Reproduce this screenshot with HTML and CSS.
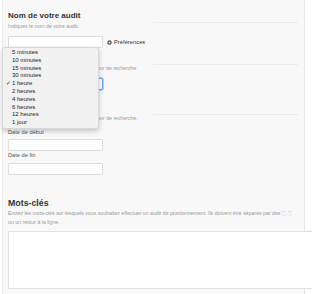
FILE: index.html
```html
<!DOCTYPE html>
<html lang="fr">
<head>
    <meta charset="UTF-8">
    <title>Nouvel audit</title>
    <link rel="stylesheet" href="styles.css">
</head>
<body>
    <div class="page">
        <div class="panel">
            <div class="field">
                <h3 class="field-title">Nom de votre audit</h3>
                <p class="help">Indiquez le nom de votre audit.</p>
                <div class="input-row">
                    <input class="text-input" type="text">
                    <span class="prefs">
                        <svg width="5" height="5" viewBox="0 0 10 10"><circle cx="5" cy="5" r="3.2" fill="none" stroke="#444" stroke-width="2.4"/></svg>
                        Préférences
                    </span>
                </div>
            </div>

            <div class="field field-select">
                <div class="field-label"></div>
                <p class="help">Fréquence de rafraîchissement du moteur de recherche</p>
                <select class="select-input focused">
                    <option></option>
                </select>
            </div>

            <div class="field field-period">
                <div class="field-label"></div>
                <p class="help">Période d'analyse des résultats du moteur de recherche.</p>
                <label class="small-label">Date de début</label>
                <input class="text-input date-input" type="text">
                <label class="small-label">Date de fin</label>
                <input class="text-input date-input end" type="text">
            </div>

            <div class="field field-keywords">
                <h3 class="field-title plain">Mots-clés</h3>
                <p class="help multi">Entrez les mots-clés sur lesquels vous souhaitez effectuer un audit de positionnement. Ils doivent être séparés par des ',', ';' ou un retour à la ligne.</p>
                <textarea class="keywords"></textarea>
            </div>
        </div>
        <div class="aside">
            <div class="aside-box"></div>
        </div>

        <ul class="dropdown">
            <li>5 minutes</li>
            <li>10 minutes</li>
            <li>15 minutes</li>
            <li>30 minutes</li>
            <li class="checked">1 heure</li>
            <li>2 heures</li>
            <li>4 heures</li>
            <li>6 heures</li>
            <li>12 heures</li>
            <li>1 jour</li>
        </ul>
    </div>
</body>
</html>
```

FILE: styles.css
```css
body {
    margin: 0;
    overflow: hidden;
    background-color: white;
    font-family: "Liberation Sans", Arial, sans-serif;
    color: #333;
}
.page {
    position: relative;
    display: flex;
    height: 294px;
    padding-left: 2px;
}
.panel {
    position: relative;
    width: 290px;
    flex-shrink: 0;
    padding: 11px 6px 0 5px;
    background-color: #f8f8f8;
    border-left: 1px solid #ececec;
    border-right: 1px solid #e6e6e6;
}
.aside {
    flex: 1;
}
.aside-box {
    margin-left: 9px;
    height: 158px;
    border-left: 1px solid #ececec;
    border-bottom: 1px solid #ececec;
}
.field-title {
    margin: 0;
    height: 10px;
    line-height: 10px;
    font-size: 8px;
    font-weight: bold;
    color: #333;
    padding-bottom: 1px;
    border-bottom: 1px solid;
    border-image: linear-gradient(to right, transparent 48%, #ebebeb 52%) 1;
}
.field-title.plain {
    font-size: 8.8px;
    border: none;
    padding-bottom: 0;
}
.field-label {
    height: 10px;
    padding-bottom: 1px;
    border-bottom: 1px solid;
    border-image: linear-gradient(to right, transparent 48%, #ebebeb 52%) 1;
}
.help {
    margin: 0;
    line-height: 7px;
    font-size: 5.2px;
    color: #9a9a9a;
}
.help.multi {
    line-height: 9px;
    margin-top: 1px;
}
.input-row {
    display: flex;
    align-items: center;
    margin-top: 6px;
}
.text-input {
    display: block;
    box-sizing: border-box;
    width: 95px;
    height: 12px;
    margin: 0;
    padding: 0;
    border: 1px solid #dcdcdc;
    border-radius: 1px;
    background-color: white;
}
.prefs {
    display: flex;
    align-items: center;
    gap: 2px;
    margin-left: 4px;
    font-size: 5.8px;
    color: #333;
}
.field-select {
    margin-top: 5px;
}
.select-input {
    display: block;
    box-sizing: border-box;
    width: 95px;
    height: 12px;
    margin-top: 6px;
    padding: 0;
    font-size: 6px;
    border: 1px solid #6aa7e8;
    border-radius: 2px;
    background-color: white;
    box-shadow: 0 0 0 1px #a9cdf5;
    appearance: none;
}
.field-period {
    margin-top: 13px;
}
.small-label {
    display: block;
    margin-top: 6px;
    line-height: 8px;
    font-size: 5.7px;
    color: #555;
}
.date-input {
    margin-top: 3px;
}
.date-input + .small-label {
    margin-top: 0;
}
.date-input.end {
    margin-top: 4px;
}
.field-keywords {
    margin-top: 23px;
}
.keywords {
    position: relative;
    z-index: 1;
    display: block;
    box-sizing: border-box;
    width: 304px;
    height: 58px;
    margin: 4px 0 0;
    padding: 0;
    border: 1px solid #e0e0e0;
    border-right: none;
    background-color: white;
    resize: none;
}
.dropdown {
    position: absolute;
    left: 2px;
    top: 47px;
    width: 97px;
    margin: 0;
    padding: 1px 0 2px;
    list-style: none;
    background-color: #f1f1f1;
    border: 1px solid #d8d8d8;
    border-radius: 3px;
    box-shadow: 0 2px 5px rgba(0,0,0,0.22);
    box-sizing: border-box;
    height: 82px;
}
.dropdown li {
    position: relative;
    padding-left: 9px;
    line-height: 7.8px;
    font-size: 6px;
    color: #222;
}
.dropdown li.checked::before {
    content: "✓";
    position: absolute;
    left: 3px;
    font-size: 6px;
}
```
